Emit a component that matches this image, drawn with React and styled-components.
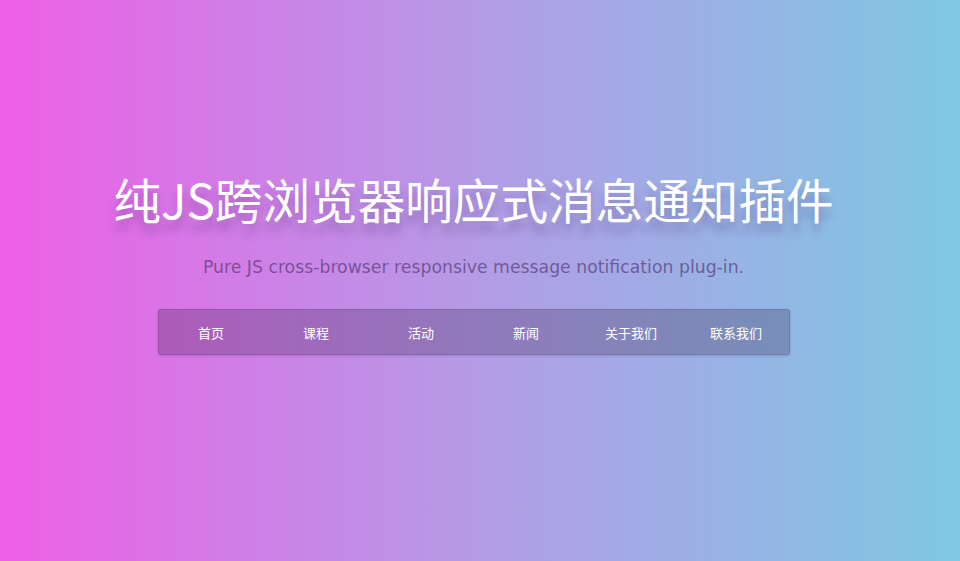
import styled, { createGlobalStyle } from 'styled-components'

const GlobalStyle = createGlobalStyle`
  html, body {
    margin: 0;
    padding: 0;
    height: 100%;
  }
  #root {
    height: 100%;
  }
`

const items = ['首页', '课程', '活动', '新闻', '关于我们', '联系我们']

const App = () => (
  <>
    <GlobalStyle />
    <Page>
      <Header>
        <Title>纯JS跨浏览器响应式消息通知插件</Title>
        <Subtitle>Pure JS cross-browser responsive message notification plug-in.</Subtitle>
        <Nav>
          {items.map((item) => (
            <NavItem key={item}>{item}</NavItem>
          ))}
        </Nav>
      </Header>
    </Page>
  </>
)

const Page = styled.div`
  height: 100%;
  min-height: 561px;
  background: linear-gradient(to right, #ee5fe6, #b39ce6 50%, #7fc8e3);
  font-family: 'Noto Sans CJK SC', 'Noto Sans', sans-serif;
  overflow: hidden;
`

const Header = styled.header`
  display: flex;
  flex-direction: column;
  align-items: center;
  padding: 163px 13px 0 0;
`

const Title = styled.h1`
  margin: 0;
  font-family: 'Noto Sans CJK SC', sans-serif;
  font-weight: 400;
  font-size: 47.6px;
  line-height: 72px;
  color: #fff;
  text-shadow: 0 10px 8px rgba(80, 50, 120, 0.35);
`

const Subtitle = styled.p`
  margin: 20px 0 0;
  font-family: 'DejaVu Sans', sans-serif;
  font-size: 17.3px;
  line-height: 24px;
  color: rgba(80, 50, 110, 0.66);
`

const Nav = styled.nav`
  margin-top: 30px;
  width: 632px;
  height: 46px;
  box-sizing: border-box;
  display: grid;
  grid-template-columns: repeat(6, 1fr);
  align-items: center;
  background: rgba(40, 20, 60, 0.25);
  border: 1px solid rgba(40, 20, 60, 0.12);
  border-radius: 3px;
  box-shadow: 0 1px 3px rgba(0, 0, 0, 0.15);
`

const NavItem = styled.a`
  text-align: center;
  font-size: 13px;
  color: #fff;
  cursor: pointer;
`

export default App
